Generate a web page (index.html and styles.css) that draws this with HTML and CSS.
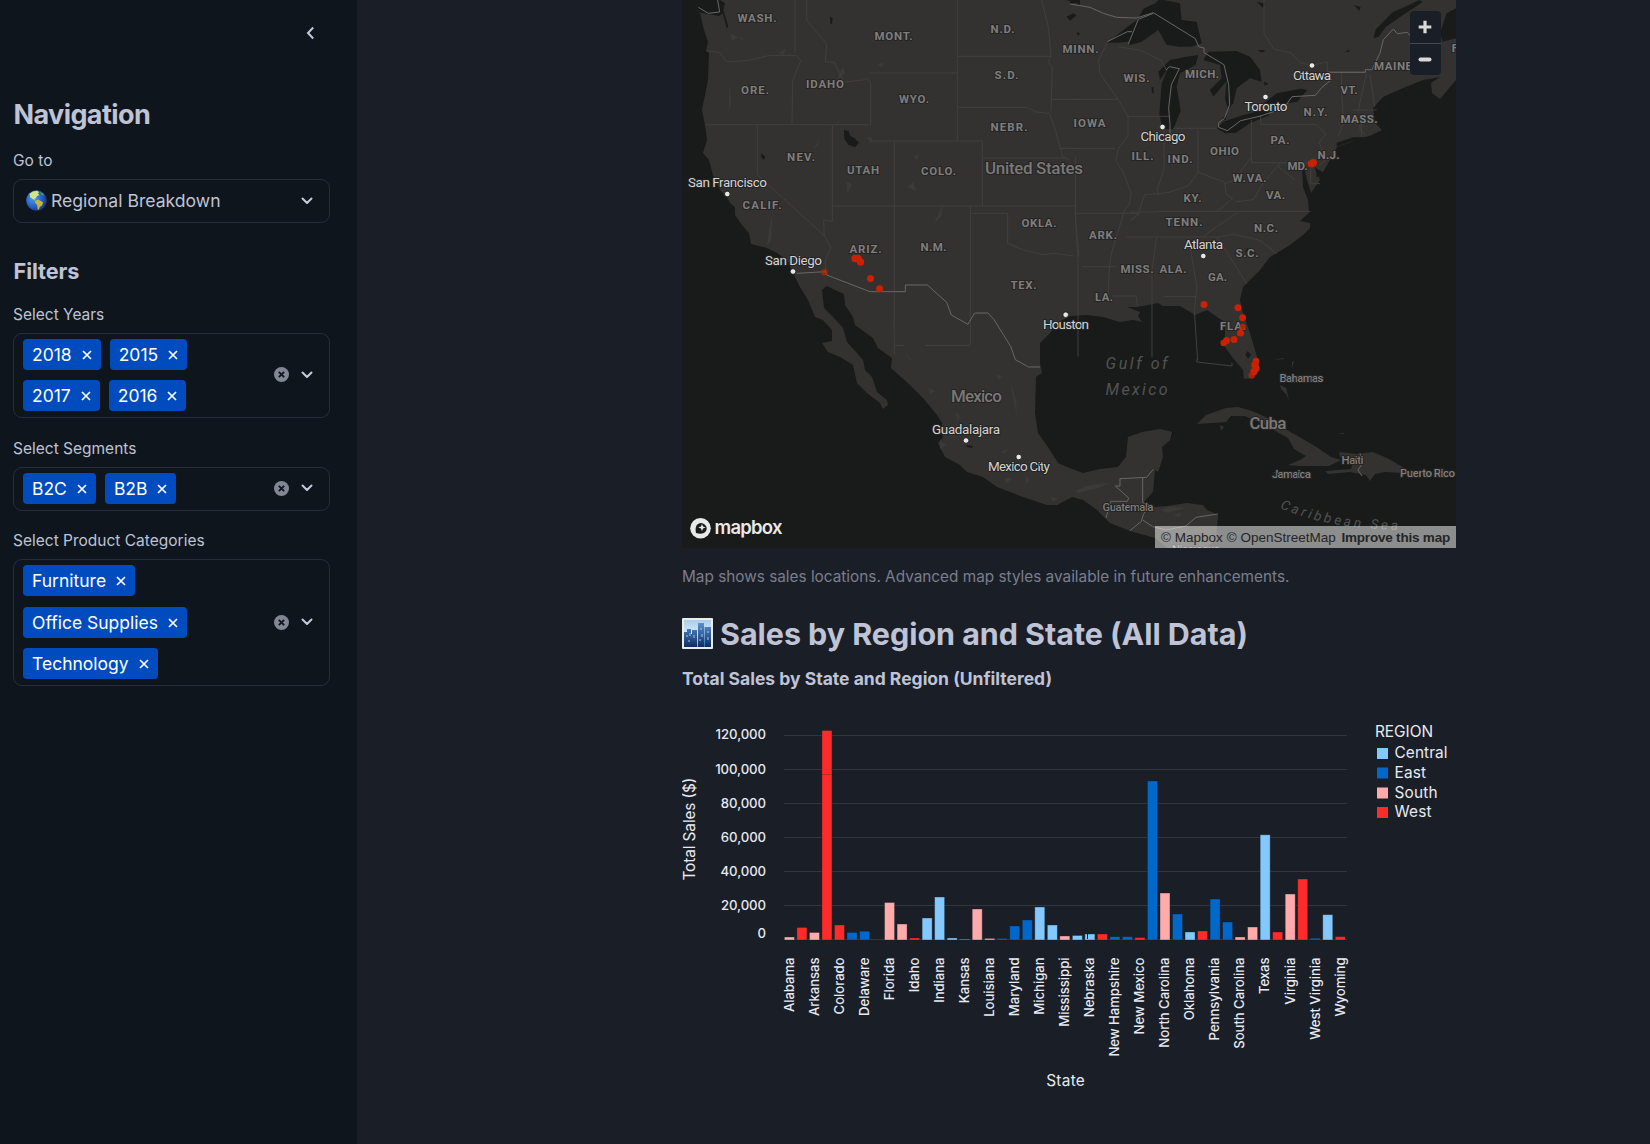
FILE: index.html
```html
<!DOCTYPE html>
<html lang="en">
<head>
<meta charset="utf-8">
<title>Regional Breakdown</title>
<link rel="stylesheet" href="styles.css">
</head>
<body>
<svg class="defs" width="0" height="0" aria-hidden="true">
  <symbol id="chev" viewBox="0 0 12 8"><path d="M1.5 1.5 6 6l4.500-4.500" fill="none" stroke="currentColor" stroke-width="2" stroke-linecap="round" stroke-linejoin="round"/></symbol>
  <symbol id="x" viewBox="0 0 10 10"><path d="M1 1l8 8M9 1L1 9" fill="none" stroke="currentColor" stroke-width="1.700"/></symbol>
  <symbol id="clear" viewBox="0 0 14 14"><circle cx="7" cy="7" r="7" fill="#838694"/><path d="M4.500 4.500l5 5M9.500 4.500l-5 5" stroke="#0e151c" stroke-width="1.700"/></symbol>
</svg>
<div class="app">
  <aside class="sidebar">
    <div class="collapse"><svg width="9" height="14" viewBox="0 0 9 14"><path d="M7.200 1.500 2 7l5.200 5.500" fill="none" stroke="#c3c7da" stroke-width="2"/></svg></div>
    <h2 class="nav-title">Navigation</h2>
    <label class="label">Go to</label>
    <div class="box single">
      <svg class="globe" width="21" height="21" viewBox="0 0 21 21"><defs><radialGradient id="sea" cx=".35" cy=".4" r=".7"><stop offset="0" stop-color="#4c9df0"/><stop offset=".6" stop-color="#245fc0"/><stop offset="1" stop-color="#1b2f70"/></radialGradient></defs><circle cx="10.500" cy="10.500" r="10.300" fill="url(#sea)"/><path d="M3.500 3.800 7 1.500l4-.8 2 1.300-1 1.800 1.500 1.200-2.700 1.200-1.200 2.600-1.400-.2L9 10.500 7 9 4.200 7.500z" fill="#d3e58c"/><path d="M9 10.800l3-1.200 5.200 2.600-1.200 3.400-2.300 1.400-.9 2.700-1.200-.4-.4-4.300-2-2z" fill="#c7b43b"/><path d="M14 1.800l3 2 1 2-2.500-1z" fill="#6f9a5e"/></svg>
      <span class="value">Regional Breakdown</span>
      <svg class="chev" width="12" height="8"><use href="#chev"/></svg>
    </div>
    <h3 class="filters-title">Filters</h3>
    <label class="label years-label">Select Years</label>
    <div class="box multi">
      <div class="tags">
        <span class="tag">2018<svg><use href="#x"/></svg></span><span class="tag">2015<svg><use href="#x"/></svg></span>
        <span class="tag">2017<svg><use href="#x"/></svg></span><span class="tag">2016<svg><use href="#x"/></svg></span>
      </div>
      <svg class="clear" width="15" height="15"><use href="#clear"/></svg><svg class="chev" width="12" height="8"><use href="#chev"/></svg>
    </div>
    <label class="label next-label">Select Segments</label>
    <div class="box multi">
      <div class="tags">
        <span class="tag">B2C<svg><use href="#x"/></svg></span><span class="tag">B2B<svg><use href="#x"/></svg></span>
      </div>
      <svg class="clear" width="15" height="15"><use href="#clear"/></svg><svg class="chev" width="12" height="8"><use href="#chev"/></svg>
    </div>
    <label class="label next-label">Select Product Categories</label>
    <div class="box multi">
      <div class="tags stacked">
        <span class="tag">Furniture<svg><use href="#x"/></svg></span><span class="tag">Office Supplies<svg><use href="#x"/></svg></span><span class="tag">Technology<svg><use href="#x"/></svg></span>
      </div>
      <svg class="clear" width="15" height="15"><use href="#clear"/></svg><svg class="chev" width="12" height="8"><use href="#chev"/></svg>
    </div>
  </aside>

  <main class="main">
    <div class="map">
      <svg class="map-art" width="774" height="548" viewBox="682 0 774 548">
        <rect x="682" width="774" height="548" class="water"/>
        <path class="land" d="M695 0L698 6 694 8 700 13 704 30 708 42 706 51 709 53 708 80 702 110 705 125 707 140 703 153 709 160 713 175 720 190 727 197 730 203 735 207 735 215 742 225 749 233 751 244 767 248 777 253 787 260 793 273 800 287 808 300 815 317 823 320 832 330 832 341 822 343 828 352 840 357 853 365 857 383 867 393 880 403 883 409 888 405 887 400 877 392 872 377 865 370 863 360 847 342 843 328 833 317 824 308 822 290 827 286 837 291 844 294 845 305 853 317 855 325 873 338 878 348 892 358 891 368 910 385 923 398 937 415 942 423 943 437 938 443 945 457 960 465 967 472 983 477 997 487 1023 497 1047 505 1057 505 1072 497 1083 500 1097 510 1110 523 1130 531 1155 538 1167 548 1205 548 1216 540 1217 527 1218 515 1207 510 1203 505 1187 503 1167 506 1155 507 1143 503 1153 492 1155 470 1158 472 1163 457 1162 447 1170 440 1172 432 1160 429 1142 432 1128 437 1126 457 1118 467 1100 469 1083 473 1067 467 1058 463 1050 450 1038 433 1035 413 1036 377 1042 373 1040 363 1040 343 1050 333 1057 323 1070 316 1087 315 1103 317 1120 322 1133 320 1142 322 1138 316 1140 312 1127 307 1137 307 1158 303 1163 306 1180 306 1195 315 1207 310 1217 317 1225 322 1225 347 1233 358 1243 370 1244 379 1252 378 1258 370 1257 357 1250 333 1242 310 1240 300 1243 287 1260 270 1270 257 1290 245 1303 235 1310 228 1310 223 1300 221 1309 213 1308 200 1303 187 1302 167 1304 167 1307 180 1311 193 1320 180 1315 168 1323 172 1330 160 1337 147 1372 135 1382 130 1375 123 1373 108 1383 97 1403 88 1423 80 1440 77 1431 83 1432 93 1440 99 1456 80V0z"/>
        <path class="land" d="M1197 424l9-9 20-7 12-1 14 4 18 8 15 10 18 10 15 9 13 9 10 3-12 6h-30l-11-1 12-5 6-4-12-7-6-11-16-9-18-9-9-4h-14l-5 6zM1220 425l4 2-3 4zM1339 452l18 2 16-2 14 6 14 8 8 6-7 1-17-1-10 2-5 7-4-6-16-3-22 2-3-3 26-2 3-10-14-2zM1272 472h22l4 2-18 2zM1280 385l6 3 3 12-3-6-5-5zM1274 360l10-2v1zM1294 361l-2 8v-7zM1338 434l6-1v1z"/>
        <!-- northwest: coast to the Dakotas -->
        <g transform="translate(680 0) scale(.33333)">
          <path class="water" d="M40 0h80l15 10-5 20 15 50-5 5-12-45-10 8-58-10-22-16zM450 50l8 3-2 20-5-3zM492 390l14 4 5 14 12 6 14 14-12 14-20-8-12-18zM243 460l12 8-2 12-8-6zM1160 50l20-10 10 6-20 16zM1160 0h40v14z"/>
          <path class="terrain" d="M150 100l24 12-18 12zM295 160l24-16-8 20zM400 448l18-30-4 18zM470 240l18-40 8 20zM590 195l22-8-5 14zM762 670l14-30 12-30-4 40zM500 545l16 8-14 28zM680 560l20-14 8 28zM700 470l16-8-4 18zM560 410l18 4-6 16zM260 740l6-40 12-70-4 86zM148 250l6 60-8 24zM180 110l10 4-4 12z"/>
          <path class="state" d="M345 0v160M80 152l40 6 20 28 60-4 70-16h78l14 16-24 60-2 132M380 0v60l60 72-4 54 26 0 30 60 60-6 8-6 12 14v128M75 374h494M832 0v423M832 169h282M568 219h264M568 423h340M832 322h208l28 14 40 4 18 50 22 80 20 10M1085 0l20 80 8 90-8 14 12 20-4 130M1115 298h85M1142 445h58M232 374v150l202 184 18 34-16 40v30M457 374v290l-26-4 2 50M457 618h730M643 423v640M907 423v195M907 474h250M1187 470v190l10 110M871 618v418M871 640h112v90l48 20 60 14 30-4 60 8M644 1036h30M735 1036h134"/>
          <path class="nation" d="M55 22l30 18 34-4-6-36M350 820l86-5 4 10 130 50h106v-20h66l58 52 14 38 50 28 20-34 40 0 18 20 50 80 14 40 40 22 34 0"/>
        </g>
        <!-- Great Lakes, Northeast and Southeast -->
        <g transform="translate(1070 0) scale(.33333)">
          <path class="water" d="M112 128l60-48 30-20 18-34 36-16 16-18 10 8 48 10 5 50 45 5 15 65-30 10h-35l-40-5-25-45-50 35-35 10-5-10-35 3zM265 215l35-35 50-10 35-5-8 30-47 25-10 40 12 72-22 55h-32l-10-45 7-92 20-46-25 36zM415 155l85-2 40 17 30 40 5 35-35-10-40 30-10 45-15 18-10-30 5-55-40 47-10-20 35-35-5-40-50-15zM440 385l20-20 60-20 60-15 22-8-5 24-57 24-42 28-33 2zM575 315l45-35 72-14 20 4-30 35-62 10zM455 355l16-10-4 16zM910 115l8-28 50-50 44-20 36-17 10 6-60 40-50 34-22 30zM560 5l26 6-8 12zM852 15l20 6-4 12zM560 150l26 0-8 8zM825 155l14-6-2 8zM20 96l10 4-6 8zM582 245l14 6-12 6zM1110 100l20-60 28-15v90l-40 10zM245 262h6v20l-6-6zM800 428l50-16h64l-74 14-40 14zM532 744l12 12-10 10-8-12zM0 12l14-4-2-8H0zM735 500l16 18-10 16z" />
          <path class="state" d="M112 128l-26 52 4 40 54 78 30 50 0 60-30 40-6 34 24 40 22 60-6 30-14 18-40 130-6 50-4 80M0 298h145M170 349h130M0 445h135M145 140l70 12 60 30 15 30M310 385h130M384 388v130l-30 40-60 20-70 6-10 30-8 22M282 388v120l-20 60 4 20M384 516l50 20 30 10 4 36 20 14-50 40M544 360v128h170M544 470l-50 70-26 10M500 605l50-6 30-50 50-60M572 345v28h165l30 30-20 24 24 50-24 20M815 218v60l6 90-16 40M770 215h116M850 330h70M890 218l-26 116M900 225l14 95M805 370h70v40M870 370v20l18 16M262 634h460M180 640v-4h84M500 640l-60 40-40 30M170 711h270l50-8 40 8 40 10 50 40M16 520v120l8 150v280M260 711l-14 100v260M355 711l26 150-8 70 10 150M440 711l40 60 50 80M37 800h100M20 640h190l-30 22M625 500l50 40M722 505v46h28M582 0v100l30 48 50 10 30 30 30 8 50-10 0 26M128 888h70l5 30M280 890h98M380 1078v8l106 12v-10M1190 0z"/>
          <path class="nation" d="M0 12l60 10 40 18 40 12 60 2 50-16 126 78 10 24 16 4v14l60 36 14 60 3 60-15 40-18 14v14l26 10 40-30 60-14 70-24 24-34 70-4 20-24 30-24M776 217h110v-8h20l24-50 10-40 30-32 12 14 30-4 10 12M112 125l60-30h14M175 132l30-74 45-18M288 210l10-10 30 6-24 48-8 70 4 50v36"/>
        </g>
        <!-- Mexico, Central America -->
        <g transform="translate(1070 270) scale(.33333)">
          <path class="water" d="M532 244l12 10-10 12-8-12z"/>
          <path class="nation" d="M250 598l-20 24-80 4v22h-14l40 36-4 10h-50l-14 50M218 624v74l20 6-18 30-6 20-34 28M218 750l30 20 40 10 60-12 30-26 66-10M870 550l8 30-14 20 12 18"/>
          <path class="terrain" d="M20 660l40-14 60-8-30 14-70 18zM270 720l30-10 50 4-60 14zM310 735l26-8-10 14z"/>
        </g>
        <path class="terrain" d="M893 319l2 8-1 14zM905 352l10 12-7-6zM928 388l8 3-6 3zM997 374l5 2-4 4zM1010 380l6 20 1 16-4-18zM940 440l6 5-6 4zM1000 452l8-3-3 5zM1004 478l8 0-5 5zM1026 476l4 4-4 4zM1050 497l8 1-5 4zM956 411l4 6-3 4z"/>
        <path class="water" d="M966 445l7 1-1 2-5-1z"/>
        <g class="states" transform="translate(0 -.1)">
          <text x="757" y="22" textLength="39">WASH.</text><text x="893.500" y="40" textLength="38">MONT.</text><text x="1002.500" y="33" textLength="24">N.D.</text><text x="1080.500" y="53" textLength="36">MINN.</text>
          <text x="755" y="94" textLength="28">ORE.</text><text x="825" y="88" textLength="38">IDAHO</text><text x="914" y="103" textLength="30">WYO.</text><text x="1006.500" y="79.500" textLength="24">S.D.</text><text x="1009" y="131.500" textLength="37">NEBR.</text><text x="1089.500" y="127.500" textLength="32">IOWA</text>
          <text x="801" y="161.500" textLength="28">NEV.</text><text x="863" y="174.500" textLength="32">UTAH</text><text x="938.500" y="175.500" textLength="35">COLO.</text><text x="762" y="209.500" textLength="39">CALIF.</text><text x="865.500" y="253.500" textLength="32">ARIZ.</text><text x="933.500" y="251.500" textLength="26">N.M.</text><text x="1039" y="227.500" textLength="35">OKLA.</text><text x="1023.500" y="289.500" textLength="26">TEX.</text>
          <text x="1136.500" y="82.500" textLength="26">WIS.</text><text x="1202" y="78.500" textLength="34">MICH.</text><text x="1142.500" y="160" textLength="22">ILL.</text><text x="1180" y="163.500" textLength="25">IND.</text><text x="1224.500" y="155.500" textLength="29">OHIO</text><text x="1280" y="144.500" textLength="19">PA.</text><text x="1315.500" y="116.500" textLength="24">N.Y.</text><text x="1349" y="94" textLength="17">VT.</text><text x="1359" y="123.500" textLength="37">MASS.</text><text x="1393" y="70.500" textLength="38">MAINE</text><text x="1328.500" y="159.500" textLength="22">N.J.</text><text x="1297.500" y="170.500" textLength="20">MD.</text><text x="1249.500" y="182.500" textLength="34">W.VA.</text><text x="1275.500" y="199.500" textLength="19">VA.</text><text x="1192.500" y="202" textLength="18">KY.</text><text x="1184" y="226.500" textLength="37">TENN.</text><text x="1266" y="232.500" textLength="24">N.C.</text><text x="1247" y="257.500" textLength="23">S.C.</text><text x="1103" y="239.500" textLength="28">ARK.</text><text x="1137" y="273.500" textLength="33">MISS.</text><text x="1173" y="273.500" textLength="27">ALA.</text><text x="1217.500" y="281.500" textLength="19">GA.</text><text x="1104" y="301.500" textLength="18">LA.</text><text x="1233" y="330.500" textLength="26">FLA.</text><text x="1455" y="52.500">F</text>
        </g>
        <g class="islands"><text x="1301.500" y="382" textLength="44">Bahamas</text><text x="1352.500" y="464" textLength="22">Haiti</text><text x="1291.500" y="477.500" textLength="39">Jamaica</text><text x="1427.500" y="477" textLength="55">Puerto Rico</text><text x="1128" y="511" textLength="51">Guatemala</text><text x="1196" y="553" textLength="48">Nicaragua</text></g>
        <g class="countries"><text x="1034" y="174" textLength="98">United States</text><text x="976.500" y="402" textLength="51">Mexico</text><text x="1268" y="429" textLength="37">Cuba</text></g>
        <g class="seas"><text x="1136.500" y="368.500" textLength="62">Gulf of</text><text x="1136.500" y="395" textLength="62">Mexico</text><path id="sea-arc" d="M1280 508Q1330 530 1408 530" fill="none"/><text class="arc"><textPath href="#sea-arc" textLength="121">Caribbean Sea</textPath></text></g>
        <g class="cities"><circle cx="727.300" cy="194" r="2.800"/><circle cx="793" cy="271.500" r="2.800"/><circle cx="1312" cy="65.500" r="2.800"/><circle cx="1265.500" cy="97" r="2.800"/><circle cx="1162.500" cy="127" r="2.800"/><circle cx="1203.300" cy="256" r="2.800"/><circle cx="1065.700" cy="314.700" r="2.800"/><circle cx="966" cy="440.500" r="2.800"/><circle cx="1018.700" cy="457" r="2.800"/>
          <text x="727.500" y="187" textLength="79">San Francisco</text><text x="793.500" y="265" textLength="57">San Diego</text><text x="1312" y="80" textLength="38">Ottawa</text><text x="1266" y="111" textLength="43">Toronto</text><text x="1163" y="141.400" textLength="45">Chicago</text><text x="1203.500" y="249.400" textLength="39">Atlanta</text><text x="1066" y="329.400" textLength="46">Houston</text><text x="966" y="434" textLength="68">Guadalajara</text><text x="1019" y="471.400" textLength="62">Mexico City</text></g>
        <g class="sales"><circle cx="855" cy="258.500" r="3.700"/><circle cx="858" cy="258.500" r="3.700"/><circle cx="860.500" cy="262" r="3.700"/><circle cx="824.500" cy="272.300" r="3.200" opacity=".7"/><circle cx="870.500" cy="278.500" r="3.500"/><circle cx="879.600" cy="288.700" r="3.500"/><circle cx="1311.500" cy="163.700" r="3.800"/><circle cx="1313.300" cy="162.700" r="3.700"/><circle cx="1204" cy="304.500" r="3.500"/><circle cx="1238" cy="307.700" r="3.500"/><circle cx="1242.700" cy="317.700" r="3.400"/><circle cx="1242.500" cy="327" r="3.200" opacity=".8"/><circle cx="1240.500" cy="333" r="3.500"/><circle cx="1234" cy="339.500" r="3.500"/><circle cx="1226.500" cy="340.500" r="3.500"/><circle cx="1223.700" cy="343" r="3.300"/><circle cx="1256" cy="361" r="3.300"/><circle cx="1255" cy="365" r="3.700"/><circle cx="1256" cy="368.500" r="3.700"/><circle cx="1254" cy="371.500" r="3.700"/><circle cx="1251.800" cy="375.500" r="3.300" opacity=".7"/></g>
        <g class="logo"><circle cx="700.500" cy="528.300" r="10.300"/><path d="M696 533.100c-1-5 0-7.500 2-9a5.500 5.500 0 0 1 8 7c-1.600 2.500-5 3.300-10 2z" fill="#191b1a"/><path d="M702 523.900l1 2.700 2.700 1-2.700 1-1 2.700-1-2.700-2.700-1 2.700-1z"/><text x="714.500" y="534" textLength="68">mapbox</text></g>
      </svg>
      <div class="zoom"><span><svg width="14" height="14"><path d="M7 .7v12.600M.7 7h12.600" stroke="#d9d9d9" stroke-width="3.200"/></svg></span><span><svg width="14" height="14"><path d="M2.500 6.500h9" stroke="#d9d9d9" stroke-width="4" stroke-linecap="round"/></svg></span></div>
      <div class="attribution"><span>© Mapbox</span> <span>© OpenStreetMap</span> <b>Improve this map</b></div>
    </div>
    <p class="caption">Map shows sales locations. Advanced map styles available in future enhancements.</p>
    <h1 class="heading"><svg width="31" height="31" viewBox="0 0 31 31"><defs><linearGradient id="sky" x2="0" y2="1"><stop offset="0" stop-color="#a9cdec"/><stop offset=".5" stop-color="#d3eaf6"/><stop offset="1" stop-color="#35b8ef"/></linearGradient><linearGradient id="tower" x2="0" y2="1"><stop offset="0" stop-color="#5792cf"/><stop offset="1" stop-color="#102b66"/></linearGradient></defs><rect width="31" height="31" rx="1" fill="#e8efe9"/><rect x="2" y="2" width="27" height="27" fill="url(#sky)"/><path d="M2 29V14h3v-3h4v5h1v-4h5v17zM16 29V5h6v24zM22.500 29V9H29v20z" fill="url(#tower)"/><path d="M4 18h2M8 15v3M6 23h2M12 17v3M18 11h2M20 16v3M17 22h2M25 14h2M26 19v3" stroke="#9acae8"/></svg><span>Sales by Region and State (All Data)</span></h1>
    <h4 class="chart-title">Total Sales by State and Region (Unfiltered)</h4>
    <svg class="chart" width="774" height="380" viewBox="682 715 774 380">
      <g id="grid"></g><g id="bars"></g><g id="ticks" class="ticks"></g>
      <text class="axis" transform="translate(695 829) rotate(-90)" text-anchor="middle" textLength="103">Total Sales ($)</text>
      <text class="axis" x="1065.500" y="1086" text-anchor="middle" textLength="38.500">State</text>
      <g class="legend"><text x="1375" y="737" textLength="58">REGION</text>
        <rect x="1377" y="748" width="11" height="11" fill="#83c9ff"/><text x="1394.500" y="758" textLength="53">Central</text>
        <rect x="1377" y="767.500" width="11" height="11" fill="#0068c9"/><text x="1394.500" y="778" textLength="31.500">East</text>
        <rect x="1377" y="787.500" width="11" height="11" fill="#ffabab"/><text x="1394.500" y="798" textLength="43">South</text>
        <rect x="1377" y="807" width="11" height="11" fill="#ff2b2b"/><text x="1394.500" y="817" textLength="37">West</text></g>
    </svg>
  </main>
</div>
<script src="chart.js"></script>
</body>
</html>
```

FILE: styles.css
```css
* { box-sizing: border-box; }
body { margin: 0; background: #1a1e26; color: #bfc3d6; font-family: Inter, "Liberation Sans", sans-serif; }
.defs { position: absolute; }
.app { display: flex; height: 1144px; overflow: hidden; }
.sidebar { width: 357px; flex: none; background: #0e151c; padding: 0 27px 0 13px; display: flex; flex-direction: column; }
.collapse { height: 94px; padding: 26px 15.500px 0 0; display: flex; justify-content: flex-end; align-items: flex-start; }
h1, h2, h3, h4, p { margin: 0; }
.nav-title { font-size: 27px; line-height: 42px; font-weight: 700; letter-spacing: -.6px; padding-left: .5px; }
.label { font-size: 15.500px; line-height: 22px; display: block; margin-top: 14px; }
.box { border: 1px solid #272c3f; border-radius: 9px; display: flex; align-items: center; padding: 0 16px 0 9px; margin-top: 7px; }
.single { height: 44px; padding-left: 12px; padding-bottom: 1px; }
.value { flex: 1; font-size: 17.600px; margin-left: 4px; }
.chev { color: #c6cadb; flex: none; }
.clear { flex: none; margin-right: 12.500px; }
.filters-title { font-size: 21.700px; line-height: 32px; font-weight: 700; letter-spacing: -.1px; margin-top: 32px; padding-left: .5px; }
.years-label { margin-top: 16.600px; }
.next-label { margin-top: 19.300px; }
.multi { padding-top: 5px; padding-bottom: 6px; }
.tags { width: 200px; margin-right: auto; display: flex; flex-wrap: wrap; gap: 10.700px 9px; }
.stacked { flex-direction: column; align-items: flex-start; }
.tag { height: 31px; background: #004cbe; color: #fff; border-radius: 4px; font-size: 17.500px; display: flex; align-items: center; gap: 10px; padding: 0 9px; }
.tag svg { width: 10px; height: 10px; margin-top: 1px; }
.main { margin-left: 325px; width: 774px; display: flex; flex-direction: column; }
.map { height: 548px; position: relative; overflow: hidden; }
.map-art { display: block; }
.water { fill: #191b1a; }
.land { fill: #343231; }
.terrain { fill: #3b3a39; }
.state { fill: none; stroke: #413f3e; stroke-width: 3; }
.nation { fill: none; stroke: #676665; stroke-width: 3; }
.map text { font-family: Roboto, sans-serif; text-anchor: middle; paint-order: stroke; stroke: #252423; stroke-width: 2px; }
.states text { font-size: 11.500px; font-weight: 700; fill: #7f7e7d; }
.islands text { font-size: 11.500px; font-weight: 500; fill: #7f7e7d; }
.countries text { font-size: 17px; font-weight: 500; fill: #7a7978; }
.map .seas text { font-size: 16px; fill: #525352; font-style: italic; stroke: none; }
.map .seas .arc { font-size: 13.500px; text-anchor: start; }
.cities text { font-size: 13.500px; fill: #d4d4d4; }
.cities circle { fill: #e8e8e8; stroke: #151515; stroke-width: .8; }
.sales { fill: #ca2100; }
.logo { fill: #e9e9e9; }
.map .logo text { font: 600 18.500px Inter, sans-serif; text-anchor: start; stroke: none; }
.zoom { position: absolute; top: 11px; right: 15.500px; width: 31px; height: 64px; background: #1a1e26; border-radius: 4px; }
.zoom span { height: 32px; display: flex; align-items: center; justify-content: center; }
.zoom span + span { border-top: 1px solid #45484e; }
.attribution { position: absolute; right: 0; bottom: 0; width: 301px; height: 22px; background: rgba(255,255,255,.5); color: #252525; font: 13.500px/23px "Liberation Sans", sans-serif; padding: 0 6px; display: flex; white-space: nowrap; gap: 4px; }
.attribution b { margin-left: auto; letter-spacing: -.2px; }
.caption { font-size: 15.330px; line-height: 22px; color: #7a7e8d; margin-top: 18px; white-space: nowrap; }
.heading { display: flex; align-items: center; gap: 7px; font-size: 30.500px; line-height: 40px; font-weight: 700; letter-spacing: -.05px; margin-top: 25.500px; white-space: nowrap; }
.chart-title { font-size: 17.500px; line-height: 24px; font-weight: 700; margin-top: 13.500px; white-space: nowrap; }
.chart { margin-top: 24px; }
.chart text { font-family: Inter, sans-serif; fill: #e8eaf2; }
.chart .axis, .chart .legend text { font-size: 15.400px; }
.ticks text { font-size: 13.200px; font-weight: 500; letter-spacing: -.08px; }
```

FILE: chart.js
```js
const BASE = 940, LEFT = 784.4, STEP = 12.52;
const COLORS = { C: '#83c9ff', E: '#0068c9', S: '#ffabab', W: '#ff2b2b' };
// [state, region, bar height]; every second state gets a label
const DATA = [
  ['Alabama','S',3],['Arizona','W',12.5],['Arkansas','S',7.5],['California','W',209.5],['Colorado','W',15],
  ['Connecticut','E',7.5],['Delaware','E',8.8],['District of Columbia','E',0],['Florida','S',37.5],['Georgia','S',16],
  ['Idaho','W',2],['Illinois','C',22],['Indiana','C',43],['Iowa','C',2],['Kansas','C',.8],
  ['Kentucky','S',31],['Louisiana','S',1.6],['Maine','E',1.6],['Maryland','E',14],['Massachusetts','E',20],
  ['Michigan','C',33],['Minnesota','C',15],['Mississippi','S',4],['Missouri','C',4.5],['Nebraska','C',6],
  ['Nevada','W',6],['New Hampshire','E',3.3],['New Jersey','E',3.3],['New Mexico','W',2.4],['New York','E',159],
  ['North Carolina','S',47],['Ohio','E',26],['Oklahoma','C',8],['Oregon','W',9],['Pennsylvania','E',41],
  ['Rhode Island','E',18],['South Carolina','S',3],['Tennessee','S',13],['Texas','C',105.2],['Utah','W',8],
  ['Virginia','S',46],['Washington','W',61],['West Virginia','E',1.8],['Wisconsin','C',25.3],['Wyoming','W',3.3]
];
let grid = '', bars = '', ticks = '';
for (let i = 0; i <= 6; i++) {
  const y = BASE - i * 34.08;
  grid += `<path d="M784 ${Math.floor(y) + (i ? .5 : -.5)}H1347" stroke="#31353d"/>`;
  ticks += `<text x="766" y="${i ? y + 3.9 : 938}" text-anchor="end">${(i * 20000).toLocaleString('en-US')}</text>`;
}
DATA.forEach(([name, region, h], i) => {
  const x = LEFT + STEP * i;
  if (h) bars += `<rect x="${x.toFixed(2)}" y="${BASE - h}" width="10" height="${h}" fill="${COLORS[region]}" stroke="#1a1e26" stroke-opacity=".45" stroke-width=".8"/>`;
  if (i % 2 === 0) ticks += `<text transform="translate(${(x + 9.3).toFixed(2)} 957.5) rotate(-90)" text-anchor="end">${name}</text>`;
});
bars += '<path d="M822 774.5h10" stroke="#c22429"/><path d="M1087.500 934v5" stroke="#1a1e26"/>';
document.getElementById('grid').innerHTML = grid;
document.getElementById('bars').innerHTML = bars;
document.getElementById('ticks').innerHTML = ticks;
```
